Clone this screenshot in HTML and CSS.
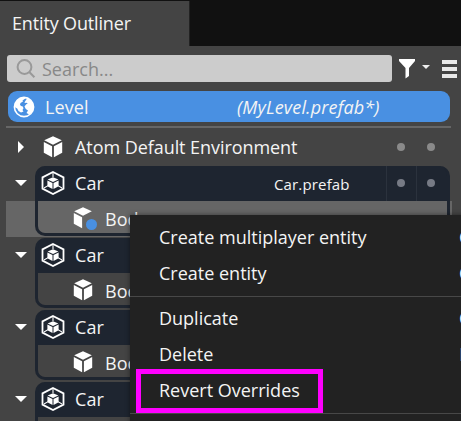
FILE: index.html
```
<!DOCTYPE html>
<html lang="en">
<head>
<meta charset="utf-8">
<title>Entity Outliner</title>
<link rel="stylesheet" href="styles.css">
</head>
<body>
<svg class="defs" aria-hidden="true">
  <symbol id="cube" viewBox="0 0 20 22"><path d="M10 .3 18.8 4.3 10 8.8 1.2 4.3Z"/><path d="M.8 6 9.1 10.2V21.3L.8 16.8Z"/><path d="M19.2 6 10.9 10.2V21.3L19.2 16.8Z"/></symbol>
  <symbol id="cube-mod" viewBox="0 0 20 22"><path d="M10 .3 18.8 4.3 10 8.8 1.2 4.3Z"/><path d="M.8 6 9.1 10.2V21.3L.8 16.8Z"/></symbol>
  <symbol id="prefab" viewBox="0 0 24 24"><path d="M12 1 22.5 6.4V17.6L12 23 1.5 17.6V6.4Z" fill="none" stroke="#fff" stroke-width="1.8"/><path d="M12 1V6M3 17 7 14.6M21 17 17 14.6" fill="none" stroke="#fff" stroke-width="1.1"/><path d="M12 6.2 17.4 8.5 12 11 6.6 8.5Z"/><path d="M6.4 9.6 11.5 12.1V18L6.4 15.3Z"/><path d="M17.6 9.6 12.5 12.1V18L17.6 15.3Z"/></symbol>
</svg>
<div class="panel">
  <header class="tabs"><h1 class="tab">Entity Outliner</h1></header>
  <div class="toolbar">
    <div class="search">
      <svg width="20" height="20" viewBox="0 0 20 20"><circle cx="8.5" cy="8" r="6.9"/><path d="M13.3 13 18.4 18.2"/></svg>
      <span>Search...</span>
    </div>
    <svg class="filter" width="16" height="20" viewBox="0 0 16 20"><path d="M0 0H16V2L10 9V17L6.5 19.5V9L0 2Z"/></svg>
    <i class="caret"></i>
    <div class="burger"><i></i><i></i><i></i></div>
  </div>
  <div class="level">
    <svg width="22" height="22" viewBox="0 0 22 22"><circle cx="11" cy="11" r="9.6" fill="none" stroke="#fff" stroke-width="1.6"/><path d="M2 7 5 3 9 1.5 13 2 9.5 4.5 10 5.5 7.5 7 7 8.8 8 10 9.8 10.5 10.5 12.3 9.5 14 10.5 15.5 8 16.5 5.5 15 4.2 12.5 1.5 11Z"/><path d="M14 2.5 17 3.5 20 7.5 20.7 12 18.8 16.5 16.2 18.6 13.5 17 15 14.5 12.8 13 11.5 10.5 13.2 8.2 14.8 7.8 13.5 6.8 11.5 7 12 5.4Z"/></svg>
    <span class="name">Level</span><em>(MyLevel.prefab*)</em>
  </div>
  <div class="tree">
    <div class="row">
      <i class="arrow closed"></i><svg class="cube" width="20" height="22"><use href="#cube"/></svg><span class="name">Atom Default Environment</span><i class="dot"></i><i class="dot last"></i>
    </div>
    <section class="group selected">
      <i class="arrow"></i>
      <div class="card">
        <div class="head"><svg width="24" height="24"><use href="#prefab"/></svg><span class="name">Car</span><span class="file">Car.prefab</span><b class="cell"><i class="dot"></i></b><b class="cell"><i class="dot"></i></b></div>
        <div class="child"><svg width="20" height="22"><use href="#cube-mod"/></svg><span>Body</span><i class="mark"></i></div>
      </div>
    </section>
    <section class="group">
      <i class="arrow"></i>
      <div class="card">
        <div class="head"><svg width="24" height="24"><use href="#prefab"/></svg><span class="name">Car</span></div>
        <div class="child"><svg width="20" height="22"><use href="#cube"/></svg><span>Body</span></div>
      </div>
    </section>
    <section class="group">
      <i class="arrow"></i>
      <div class="card">
        <div class="head"><svg width="24" height="24"><use href="#prefab"/></svg><span class="name">Car</span></div>
        <div class="child"><svg width="20" height="22"><use href="#cube"/></svg><span>Body</span></div>
      </div>
    </section>
    <section class="group">
      <i class="arrow"></i>
      <div class="card">
        <div class="head"><svg width="24" height="24"><use href="#prefab"/></svg><span class="name">Car</span></div>
        <div class="child"></div>
      </div>
    </section>
  </div>
  <div class="menu">
    <div class="item"><span>Create multiplayer entity</span><kbd>C</kbd></div>
    <div class="item"><span>Create entity</span><kbd>C</kbd></div>
    <hr>
    <div class="item"><span>Duplicate</span><kbd>C</kbd></div>
    <div class="item"><span>Delete</span><kbd class="d">D</kbd></div>
    <div class="item"><span>Revert Overrides</span></div>
    <hr>
  </div>
  <div class="highlight"></div>
</div>
</body>
</html>
```
FILE: styles.css
```
* { box-sizing: border-box; }
body { margin: 0; background: #444; }
.defs { position: absolute; width: 0; height: 0; }
svg { fill: #fff; flex: none; display: block; }
.panel {
  position: relative; width: 461px; height: 421px; overflow: hidden;
  background: #444; color: #f4f4f4;
  font: 370 18px/24px "Open Sans", "Noto Sans", sans-serif; white-space: nowrap;
}
.tabs { height: 46px; background: #111; padding-top: 1px; }
.tab {
  width: 190px; height: 45px; margin: 0; padding: 10px 0 0 12px;
  background: #444; border-right: 1px solid #222;
  font-size: 18px; font-weight: 370; line-height: 24px; letter-spacing: -.15px;
}
.toolbar { display: flex; align-items: center; height: 45px; padding: 0 0 0 7px; }
.search {
  display: flex; align-items: center; width: 385px; height: 27px;
  padding-left: 9px; border-radius: 3px; background: #ccc; color: #888;
}
.search svg { fill: none; stroke: #999; stroke-width: 2; margin-right: 6px; }
.filter { margin-left: 7px; }
.caret { margin: -3px 0 0 7px; border: 4.5px solid transparent; border-top: 4px solid #eee; border-bottom: 0; }
.burger { display: flex; flex-direction: column; gap: 3px; margin-left: 12px; }
.burger i { width: 15px; height: 4px; background: #e8e8e8; }
.level {
  display: flex; align-items: center; width: 442px; height: 31px;
  margin-left: 8px; padding-left: 5px; border-radius: 9px; background: #4990e2;
}
.level .name { width: 192px; margin-left: 10px; letter-spacing: .1px; }
.level em { letter-spacing: .15px; }
.tree { margin-top: 4px; border-top: 2px solid #666; width: 445px; margin-left: 6px; padding-top: 2px; }
.row { display: flex; align-items: center; height: 36px; padding-bottom: 2px; }
.arrow { flex: none; width: 0; height: 0; border: 6px solid transparent; border-top-color: #fff; border-bottom: 0; }
.closed { margin-left: 12px; border: 6px solid transparent; border-left-color: #fff; border-right: 0; }
.cube { margin-left: 19px; }
.row .name { margin-left: 12px; flex: 1; letter-spacing: -.06px; }
.dot { flex: none; width: 8px; height: 8px; border-radius: 50%; background: #8a8a8a; margin-right: 22px; }
.dot.last { margin-right: 16px; }
.group { display: flex; width: 446px; height: 70px; margin-bottom: 2px; padding-left: 9px; }
.group > .arrow { margin-top: 14px; }
.selected { background: linear-gradient(#444 35px, #666 35px); height: 71px; margin-bottom: 1px; }
.card { width: 415px; height: 70px; margin-left: 8px; border-radius: 10px; border: 3px solid #1e2530; border-top: 0; background: #1e2530; }
.head { display: flex; align-items: center; height: 35px; padding: 0 0 1px 3px; }
.head .name { margin: 0 0 0 10px; width: 199px; letter-spacing: .1px; }
.file { width: 112px; font-size: 15px; padding-top: 2px; letter-spacing: .15px; }
.cell { flex: none; display: flex; align-items: center; width: 30px; height: 35px; border-left: 1px solid #2b323d; padding-left: 10px; }
.cell .dot { margin: 0; background: #777b85; }
.child { position: relative; display: flex; align-items: center; height: 32px; padding: 2px 0 0 35px; background: #444; border-radius: 0 0 7px 7px; }
.selected .child { background: #666; }
.child span { margin: 2px 0 0 12px; }
.mark { position: absolute; left: 48px; top: 18px; width: 11px; height: 11px; border-radius: 50%; background: #4990e2; }
.menu {
  position: absolute; left: 130px; top: 215px; width: 360px; height: 220px;
  padding-top: 5px; background: #222; box-shadow: 0 0 5px rgba(0,0,0,.45);
}
.item { display: flex; align-items: center; height: 36px; padding: 0 0 2px 29px; }
.item span { width: 300px; }
.item kbd { font: inherit; }
.item .d { color: #999; }
hr { height: 1px; margin: 4px 0; border: 0; background: #484848; }
.highlight { position: absolute; left: 136px; top: 369px; width: 187px; height: 44px; border: 5px solid #f0f; }
```
